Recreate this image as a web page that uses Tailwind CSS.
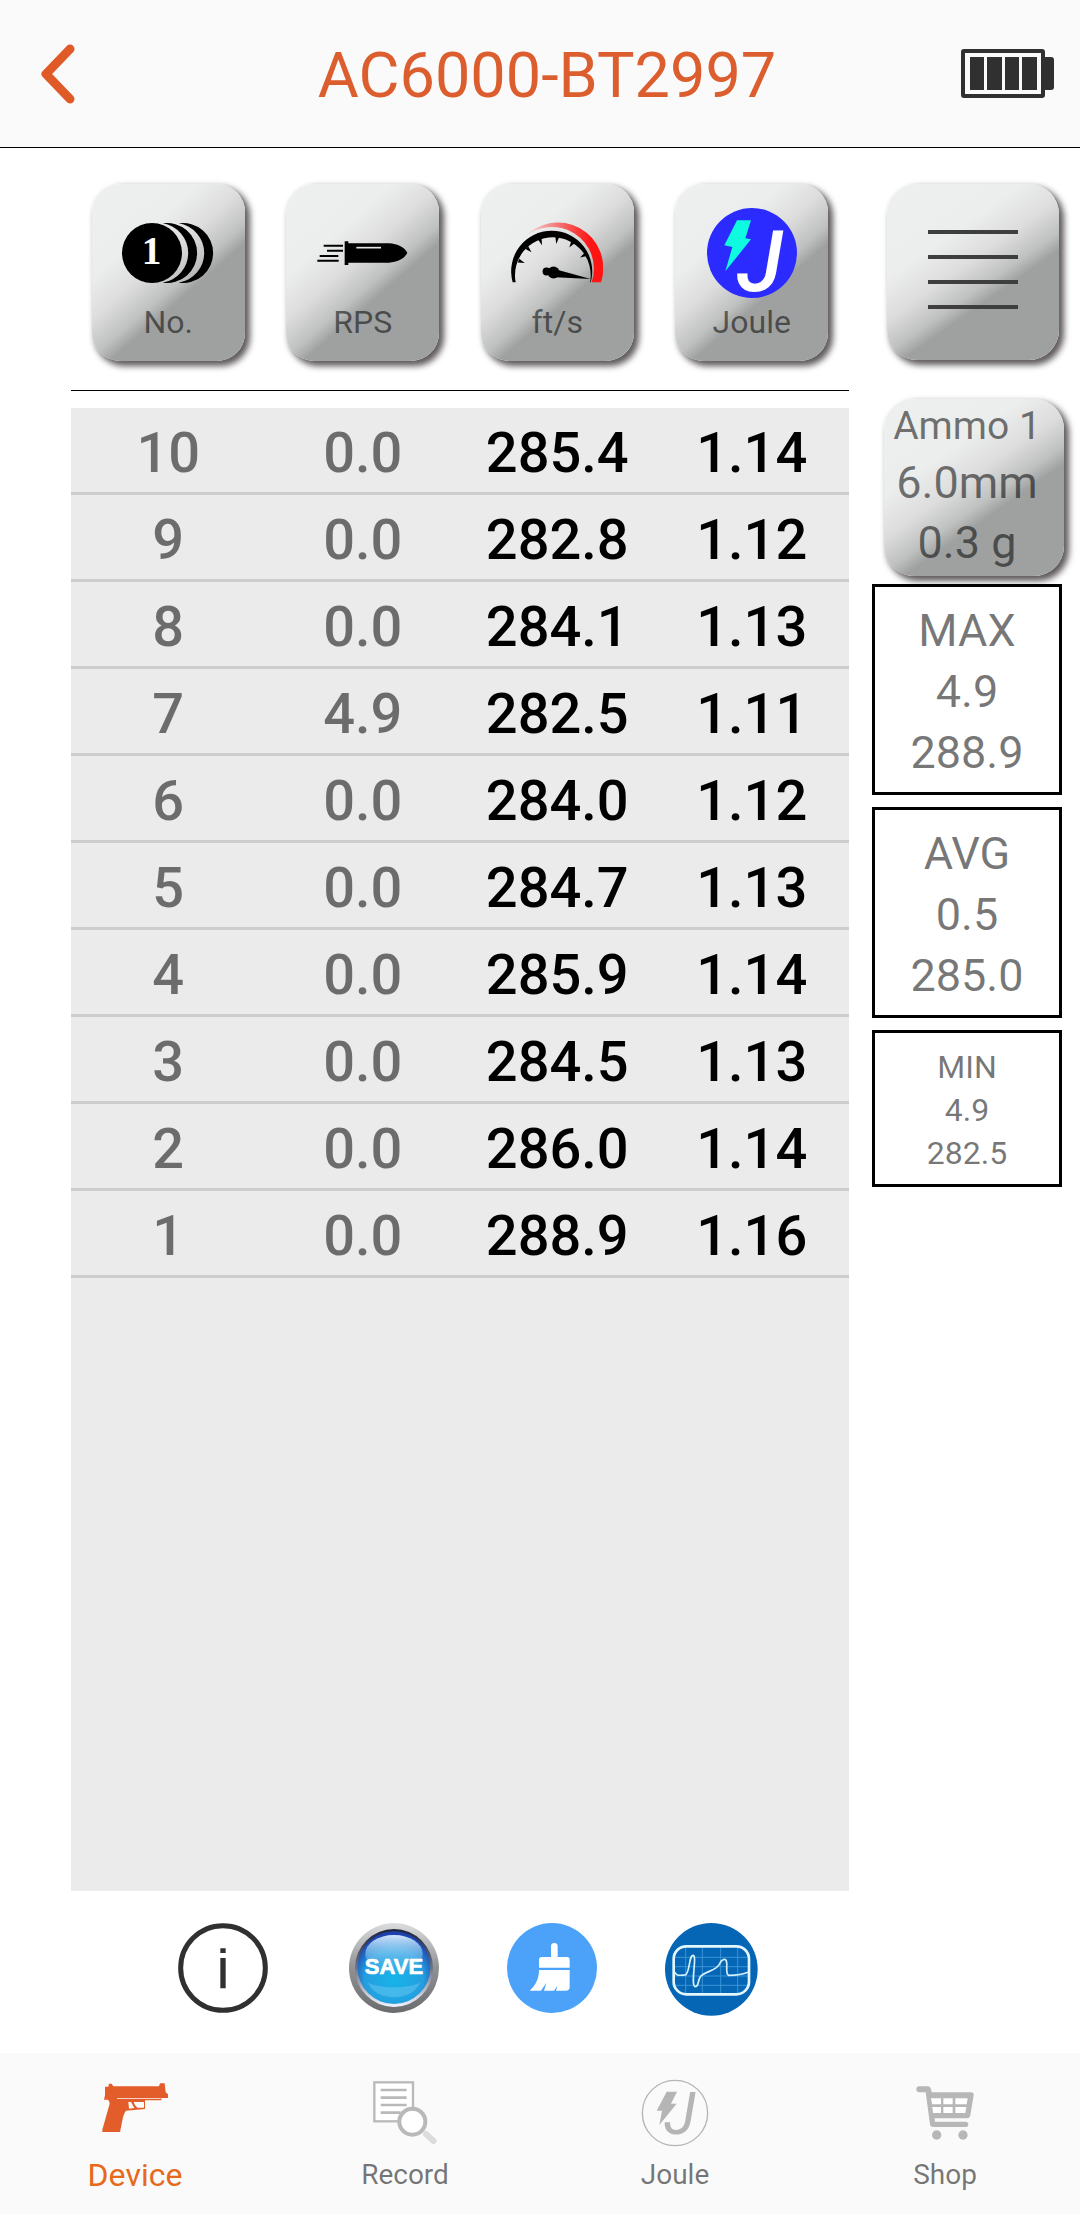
<!doctype html>
<html lang="en">
  <head>
    <meta charset="utf-8" />
    <meta name="viewport" content="width=device-width, initial-scale=1.0" />
    <script src="https://cdn.jsdelivr.net/npm/@tailwindcss/browser@4"></script>
    <title>AC6000-BT2997</title>
  </head>
  <body class="bg-white font-[Roboto,sans-serif] text-black/54">
    <div class="min-h-screen flex flex-col">
      <!-- Header -->
      <header class="h-[148px] shrink-0 grid grid-cols-[1fr_auto_1fr] items-center pl-10 pr-[26px] bg-[#fafafa] border-b border-black">
        <button type="button" aria-label="Back" class="justify-self-start">
          <svg class="block w-9 h-[60px]" viewBox="0 0 36 60" fill="none" stroke="#e05a28" stroke-width="9" stroke-linecap="round" stroke-linejoin="round">
            <path d="M30 5 6 30 30 55" />
          </svg>
        </button>
        <h1 class="pt-1 text-[63px] leading-[72px] text-[#dc5e2e]">AC6000-BT2997</h1>
        <svg class="justify-self-end w-[93px] h-[49px]" viewBox="0 0 93 49" role="img" aria-label="Battery full">
          <rect x="80" y="8" width="13" height="33" rx="3" fill="#303030" />
          <rect x="2" y="2" width="80" height="45" rx="1" fill="#fafafa" stroke="#303030" stroke-width="4" />
          <path d="M9 8h14v33H9zM26 8h15v33H26zM44 8h14v33H44zM61 8h15v33H61z" fill="#303030" />
        </svg>
      </header>

      <main class="flex-1 flex pl-[71px]">
        <!-- Shots -->
        <section class="flex-1 flex flex-col">
          <div class="grid grid-cols-4 justify-items-center pt-9 pb-[29px] border-b border-black text-[32px] leading-[48px]">
            <button type="button" class="w-[153px] h-[177px] rounded-[28px] flex flex-col items-center pt-6 bg-[linear-gradient(139deg,#eef0ef_0%,#eceeed_30%,#dcdddc_44%,#bfc1c0_56%,#9fa1a0_62%)] shadow-[4px_4px_6px_1px_#5f5a5c]">
              <svg class="w-[92px] h-[90px]" viewBox="0 0 276 270">
                <circle cx="90" cy="135" r="90" />
                <path d="M122 46A90 90 0 1 1 122 224A90 90 0 0 0 122 46Z" />
                <path d="M170 46A90 90 0 1 1 170 224A90 90 0 0 0 170 46Z" />
                <text x="89" y="169" text-anchor="middle" fill="#fff" font-family="Liberation Serif, serif" font-weight="700" font-size="118">1</text>
              </svg>
              No.
            </button>
            <button type="button" class="w-[153px] h-[177px] rounded-[28px] flex flex-col items-center pt-6 bg-[linear-gradient(139deg,#eef0ef_0%,#eceeed_30%,#dcdddc_44%,#bfc1c0_56%,#9fa1a0_62%)] shadow-[4px_4px_6px_1px_#5f5a5c]">
              <svg class="w-[92px] h-[90px]" viewBox="0 0 276 270">
                <path d="M20 113h58M30 128h48M8 144h56M1 158h64" stroke="#000" stroke-width="6" />
                <path d="M83 100h11v6H215c28 2 48 12 56 28c-8 18-28 28-56 30H94v7H83z" />
                <path d="M118 119h74" stroke="#e4e5e5" stroke-width="5" />
              </svg>
              RPS
            </button>
            <button type="button" class="w-[153px] h-[177px] rounded-[28px] flex flex-col items-center pt-6 bg-[linear-gradient(139deg,#eef0ef_0%,#eceeed_30%,#dcdddc_44%,#bfc1c0_56%,#9fa1a0_62%)] shadow-[4px_4px_6px_1px_#5f5a5c]">
              <svg class="w-[92px] h-[90px]" viewBox="0 0 277 270">
                <linearGradient id="dial" x1="0" x2="1">
                  <stop offset="0" stop-color="#ff1414" stop-opacity="0" />
                  <stop offset=".4" stop-color="#ff1414" stop-opacity=".5" />
                  <stop offset=".85" stop-color="#ff1414" />
                </linearGradient>
                <path d="M36 92A137 137 0 0 1 271 223H243A126 126 0 0 0 36 92Z" fill="url(#dial)" />
                <path d="M5 223A122 122 0 1 1 240 223H238A114 114 0 1 0 14 223Z" />
                <path d="M-6-108H6L0-88Z" transform="translate(124 195) rotate(-70)" />
                <path d="M-6-108H6L0-88Z" transform="translate(124 195) rotate(-45)" />
                <path d="M-6-110H6L0-89Z" transform="translate(124 195) rotate(-20)" />
                <path d="M-6-110H6L0-88Z" transform="translate(124 195) rotate(8)" />
                <path d="M-6-112H6L0-92Z" transform="translate(124 195) rotate(34)" />
                <path d="M-6-116H6L0-96Z" transform="translate(124 195) rotate(61)" />
                <circle cx="107" cy="191" r="12" />
                <circle cx="128" cy="194" r="18" />
                <path d="M134 184 240 213 134 208Z" />
              </svg>
              ft/s
            </button>
            <button type="button" class="w-[153px] h-[177px] rounded-[28px] flex flex-col items-center pt-6 bg-[linear-gradient(139deg,#eef0ef_0%,#eceeed_30%,#dcdddc_44%,#bfc1c0_56%,#9fa1a0_62%)] shadow-[4px_4px_6px_1px_#5f5a5c]">
              <svg class="w-[92px] h-[90px] overflow-visible" viewBox="0 0 276 270">
                <circle cx="138" cy="135" r="135" fill="#2b2bff" />
                <path d="M93 37h42l-17 54 17 3-77 96 21-73-24-5z" fill="#0ffbe0" />
                <text x="92" y="248" fill="#fff" font-family="Roboto, sans-serif" font-style="italic" font-weight="500" font-size="256">J</text>
              </svg>
              Joule
            </button>
          </div>

          <div class="flex-1 mt-[17px] bg-[#ebebeb]">
            <table class="w-full table-fixed border-collapse text-center text-[56px] leading-[78px] font-medium">
              <tbody id="shots"></tbody>
            </table>
          </div>
        </section>

        <!-- Menu and statistics -->
        <aside class="w-[231px] flex flex-col pt-9">
          <button type="button" aria-label="Menu" class="ml-[38px] w-[172px] h-[176px] pb-[6px] rounded-[30px] flex flex-col items-center justify-center gap-[21px] bg-[linear-gradient(145deg,#eef0ef_0%,#eceeed_32%,#dcdddc_46%,#bfc1c0_57%,#9fa1a0_63%)] shadow-[4px_4px_6px_1px_#5f5a5c]">
            <span class="w-[90px] h-1 bg-[#3e3e3e]"></span>
            <span class="w-[90px] h-1 bg-[#3e3e3e]"></span>
            <span class="w-[90px] h-1 bg-[#3e3e3e]"></span>
            <span class="w-[90px] h-1 bg-[#3e3e3e]"></span>
          </button>
          <button type="button" class="ml-[35px] mt-[39px] w-[180px] h-[177px] rounded-[30px] pr-[14px] pb-1 bg-[linear-gradient(145deg,#eef0ef_0%,#eceeed_32%,#dcdddc_46%,#bfc1c0_57%,#9fa1a0_63%)] shadow-[4px_4px_6px_1px_#5f5a5c] text-[45px] leading-[60px]">
            <span class="block text-[39px] leading-[54px]">Ammo 1</span>
            <span class="block">6.0mm</span>
            <span class="block">0.3 g</span>
          </button>
          <dl class="mt-2 ml-[23px] w-[190px] flex flex-col gap-3 text-center">
            <div class="h-[211px] pt-[13px] border-3 border-black text-[45px] leading-[61px]">
              <dt>MAX</dt>
              <dd>4.9</dd>
              <dd>288.9</dd>
            </div>
            <div class="h-[211px] pt-[13px] border-3 border-black text-[45px] leading-[61px]">
              <dt>AVG</dt>
              <dd>0.5</dd>
              <dd>285.0</dd>
            </div>
            <div class="h-[157px] pt-[13px] border-3 border-black text-[32px] leading-[43px]">
              <dt>MIN</dt>
              <dd>4.9</dd>
              <dd>282.5</dd>
            </div>
          </dl>
        </aside>
      </main>

      <!-- Actions -->
      <div class="h-[162px] shrink-0 flex items-start gap-[68px] pl-[178px] pt-8">
        <button type="button" aria-label="Info" class="mr-[13px]">
          <svg class="block w-[90px] h-[90px]" viewBox="0 0 270 270">
            <circle cx="135" cy="135" r="127" fill="none" stroke="#303030" stroke-width="15" />
            <path d="M127 76h16v14h-16zM127 105h16v91h-16z" fill="#303030" />
          </svg>
        </button>
        <button type="button" aria-label="Save">
          <svg class="block w-[90px] h-[90px]" viewBox="0 0 270 270">
            <linearGradient id="rim" x2="0" y2="1">
              <stop offset="0" stop-color="#dcdddf" />
              <stop offset=".5" stop-color="#8f9194" />
              <stop offset="1" stop-color="#6b6c6e" />
            </linearGradient>
            <linearGradient id="well" x2="0" y2="1">
              <stop offset="0" stop-color="#1c2238" />
              <stop offset=".5" stop-color="#6d7484" />
              <stop offset="1" stop-color="#f2f4ff" />
            </linearGradient>
            <radialGradient id="face" cy=".65" r=".62">
              <stop offset="0" stop-color="#16b4ea" />
              <stop offset=".65" stop-color="#259edf" />
              <stop offset="1" stop-color="#1c3fae" />
            </radialGradient>
            <linearGradient id="gloss" x2="0" y2="1">
              <stop offset="0" stop-color="#cfe4fb" />
              <stop offset="1" stop-color="#4fb4ea" stop-opacity=".2" />
            </linearGradient>
            <circle cx="135" cy="135" r="135" fill="url(#rim)" />
            <circle cx="135" cy="135" r="117" fill="url(#well)" />
            <circle cx="135" cy="134" r="109" fill="url(#face)" />
            <ellipse cx="135" cy="92" rx="86" ry="56" fill="url(#gloss)" />
            <path d="M56 178c30 20 128 20 158 0c-24 60-134 60-158 0z" fill="#7fd0f5" opacity=".4" />
            <text x="135" y="154" text-anchor="middle" fill="#fff" stroke="#fff" stroke-width="2" font-family="Liberation Sans, sans-serif" font-weight="700" font-size="66">SAVE</text>
          </svg>
        </button>
        <button type="button" aria-label="Clear">
          <svg class="block w-[90px] h-[90px]" viewBox="0 0 270 270">
            <circle cx="135" cy="135" r="135" fill="#4ba2f8" />
            <path d="M132 102V70a10 10 0 0 1 20 0v32h28q8 0 8 8v24H96v-24q0-8 8-8z" fill="#fff" />
            <path d="M96 141h92v50q0 12-12 12h-29l4-14-10 14h-30l7-24-16 24H68c16-14 28-34 28-62z" fill="#fff" />
          </svg>
        </button>
        <button type="button" aria-label="Chart">
          <svg class="block w-[93px] h-[93px]" viewBox="0 0 279 279">
            <circle cx="139" cy="139" r="139" fill="#0566b5" />
            <path d="M62 74v138M112 74v138M167 74v138M218 74v138M28 103h220M28 131h220M28 159h220M28 187h220" stroke="#3a94d6" stroke-width="3" />
            <rect x="26" y="70" width="226" height="144" rx="38" fill="none" stroke="#e4f7fd" stroke-width="8" />
            <path d="M29 147c6 12 12 10 32 9c14-6 10-60 24-59c12 2-10 92 6 94c12 0 6-24 18-33c20-16 42-14 54-34c6-14 20-22 22-6c2 14-4 36 6 39c22 0 38 0 58-9" fill="none" stroke="#d4f2fb" stroke-width="5" />
          </svg>
        </button>
      </div>

      <!-- Tab bar -->
      <nav class="h-[161px] shrink-0 grid grid-cols-4 bg-[#fafafa] text-[28px]">
        <a href="#" aria-current="page" class="flex flex-col items-center pt-6 text-[32px] text-[#e66a1a]">
          <svg class="w-[72px] h-[72px]" viewBox="0 0 216 216" fill="#e25d29">
            <path d="M18 29h10l2-9h8l5 8H180l3-9h14l3 27 7 6v11h-20v7H138v26l-57 5q-6 6-9 20l-9 44H10V158L32 80q0-8-5-12H15l3-14z" />
            <path d="M88 75h8l10 18-16 2zM104 75h31v17h-20q-8-5-11-17zM54 64h131v2H54z" fill="#fafafa" />
          </svg>
          <span class="leading-[40px] mt-[6px]">Device</span>
        </a>
        <a href="#" class="flex flex-col items-center pt-6">
          <svg class="w-[72px] h-[72px]" viewBox="0 0 216 216">
            <rect x="16" y="16" width="116" height="117" fill="#fff" stroke="#b9b9b9" stroke-width="7" />
            <path d="M35 39h78M35 62h78M35 84h78M35 107h60" stroke="#b9b9b9" stroke-width="8" />
            <path d="M171 171 194 192" stroke="#dcdcdc" stroke-width="18" stroke-linecap="round" />
            <circle cx="130" cy="134" r="39" fill="#fff" stroke="#b9b9b9" stroke-width="12" />
          </svg>
          <span class="leading-[40px] mt-[6px]">Record</span>
        </a>
        <a href="#" class="flex flex-col items-center pt-6">
          <svg class="w-[72px] h-[72px]" viewBox="0 0 216 216" fill="#b5b5b5">
            <circle cx="108" cy="108" r="98" fill="none" stroke="#b5b5b5" stroke-width="4" />
            <path d="M83 44h31l-18 36h17L61 144l8-43H53z" />
            <text x="76" y="170" font-family="Roboto, sans-serif" font-style="italic" font-weight="400" font-size="176">J</text>
          </svg>
          <span class="leading-[40px] mt-[6px]">Joule</span>
        </a>
        <a href="#" class="flex flex-col items-center pt-6">
          <svg class="w-[72px] h-[72px]" viewBox="0 0 216 216" fill="#b7b7b7">
            <path d="M31 28h26q7 0 9 8l2 10H186q9 0 8 9l-10 60q-2 9-10 9H77l1 10h92a8 8 0 0 1 0 16H72q-8 0-9-8L50 46H31a9 9 0 0 1 0-18z" />
            <path d="M66 64h30v18H69zM103 64h28v18h-28zM139 64h37l-3 18h-34zM70 90h26v18H72zM103 90h28v18h-28zM139 90h33l-3 18h-30z" fill="#fff" />
            <circle cx="83" cy="174" r="14" />
            <circle cx="162" cy="174" r="14" />
          </svg>
          <span class="leading-[40px] mt-[6px]">Shop</span>
        </a>
      </nav>
    </div>

    <script>
      // Shot number, rounds per second, speed, energy
      const shots = [
        [10, "0.0", "285.4", "1.14"],
        [9, "0.0", "282.8", "1.12"],
        [8, "0.0", "284.1", "1.13"],
        [7, "4.9", "282.5", "1.11"],
        [6, "0.0", "284.0", "1.12"],
        [5, "0.0", "284.7", "1.13"],
        [4, "0.0", "285.9", "1.14"],
        [3, "0.0", "284.5", "1.13"],
        [2, "0.0", "286.0", "1.14"],
        [1, "0.0", "288.9", "1.16"],
      ];

      const body = document.getElementById("shots");
      shots.forEach(function (shot) {
        const row = body.insertRow();
        row.className = "border-b-3 border-[#cdcdcd]";
        shot.forEach(function (value, i) {
          const cell = row.insertCell();
          cell.textContent = value;
          cell.className = i > 1 ? "p-0 pt-[6px] text-black" : "p-0 pt-[6px]";
        });
      });
    </script>
  </body>
</html>
